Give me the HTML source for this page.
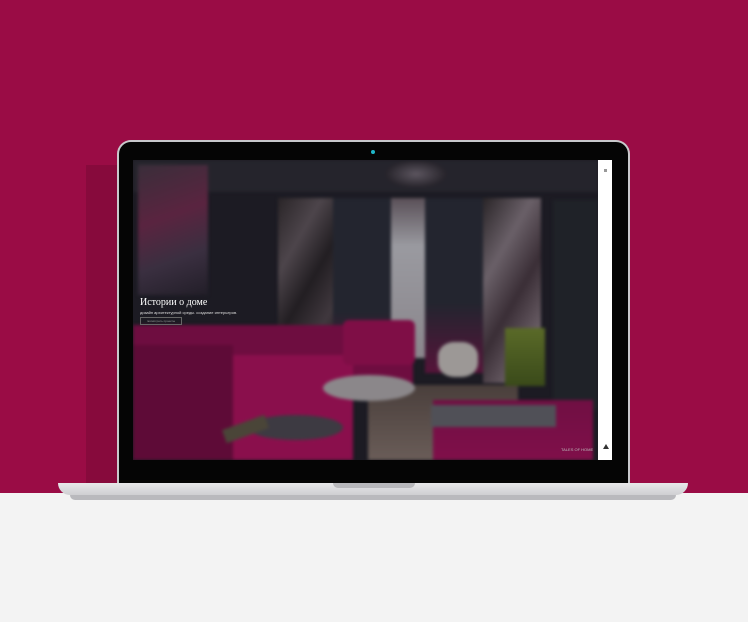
<!DOCTYPE html>
<html><head><meta charset="utf-8"><style>
html,body{margin:0;padding:0}
body{width:748px;height:622px;position:relative;overflow:hidden;background:#f3f3f3;font-family:"Liberation Sans","Noto Sans CJK SC",sans-serif}
.bg{position:absolute;left:0;top:0;width:748px;height:493px;background:#9a0c45}
.shadow{position:absolute;left:86px;top:165px;width:60px;height:328px;background:#870a3c}
.lid{position:absolute;left:117px;top:140px;width:513px;height:345px;background:#c9c9cc;border-radius:14px 14px 0 0}
.bezel{position:absolute;left:119px;top:142px;width:509px;height:343px;background:#050505;border-radius:12px 12px 0 0}
.cam{position:absolute;left:371px;top:150px;width:4px;height:4px;border-radius:50%;background:#1fb7c9}
.screen{position:absolute;left:133px;top:160px;width:465px;height:300px;overflow:hidden;background:#1c1b23}
.in{position:absolute;left:0;top:0;width:465px;height:300px;filter:blur(1.5px)}
.sidebar{position:absolute;left:598px;top:160px;width:14px;height:300px;background:#fff}
.base{position:absolute;left:58px;top:483px;width:630px;height:12px;background:linear-gradient(#e8e8ea,#cfcfd2);border-radius:0 0 20px 20px}
.base2{position:absolute;left:70px;top:495px;width:606px;height:5px;background:#b9b9bd;border-radius:0 0 40px 40px}
.notch{position:absolute;left:333px;top:483px;width:82px;height:5px;background:#b8b8bc;border-radius:0 0 6px 6px}
.s{position:absolute}
</style></head><body>
<div class="bg"></div>
<div class="shadow"></div>
<div class="lid"></div>
<div class="bezel"></div>
<div class="cam"></div>
<div class="screen">
<div class="in">
 <div class="s" style="left:0;top:0;width:465px;height:32px;background:#25242c"></div>
 <div class="s" style="left:252px;top:0;width:62px;height:28px;border-radius:50%;background:radial-gradient(#5d5660,#26232a 70%)"></div>
 <div class="s" style="left:5px;top:5px;width:70px;height:130px;background:linear-gradient(160deg,#3a2e3a,#5a2440 40%,#3a2f40 70%,#221e28)"></div>
 <div class="s" style="left:145px;top:38px;width:55px;height:160px;background:linear-gradient(120deg,#2a2528,#4d454b 30%,#221e22 55%,#40383e 80%,#201a1e)"></div>
 <div class="s" style="left:200px;top:38px;width:58px;height:175px;background:linear-gradient(180deg,#23252f,#23252f 65%,#56143a)"></div>
 <div class="s" style="left:258px;top:38px;width:34px;height:160px;background:linear-gradient(180deg,#5a5058,#9a9aa0 30%,#8a868c)"></div>
 <div class="s" style="left:292px;top:38px;width:58px;height:175px;background:linear-gradient(180deg,#23252f,#23252f 60%,#56143a)"></div>
 <div class="s" style="left:350px;top:38px;width:58px;height:185px;background:linear-gradient(120deg,#2a2528,#6a6068 30%,#3a2e36 55%,#6a5e66 80%,#2a2228)"></div>
 <div class="s" style="left:420px;top:40px;width:45px;height:210px;background:#1f2228"></div>
 <div class="s" style="left:0;top:165px;width:280px;height:60px;background:#6e0d40"></div>
 <div class="s" style="left:0;top:185px;width:100px;height:115px;background:#5e0b37"></div>
 <div class="s" style="left:100px;top:195px;width:120px;height:105px;background:#8a0f4c"></div>
 <div class="s" style="left:210px;top:160px;width:72px;height:45px;border-radius:6px;background:#7f0e46"></div>
 <div class="s" style="left:235px;top:225px;width:150px;height:75px;background:linear-gradient(#4a3f3c,#6a5d58)"></div>
 <div class="s" style="left:190px;top:215px;width:92px;height:26px;border-radius:50%;background:#8b878a"></div>
 <div class="s" style="left:305px;top:182px;width:40px;height:35px;border-radius:40%;background:#9c9896"></div>
 <div class="s" style="left:372px;top:168px;width:40px;height:58px;background:linear-gradient(#5a6a28,#3a4a1a)"></div>
 <div class="s" style="left:300px;top:240px;width:160px;height:60px;background:linear-gradient(#700f43,#800f4a)"></div>
 <div class="s" style="left:298px;top:245px;width:125px;height:22px;background:#505057"></div>
 <div class="s" style="left:115px;top:255px;width:95px;height:25px;border-radius:50%;background:#3d3a42"></div>
 <div class="s" style="left:90px;top:262px;width:45px;height:14px;background:#4a4538;transform:rotate(-20deg)"></div>
</div>
 <div style="position:absolute;left:7px;top:137px;color:#fff;font-family:'Liberation Serif',serif;font-size:10px">Истории о доме</div>
 <div style="position:absolute;left:7px;top:150px;color:#ddd;font-size:4px;white-space:nowrap">дизайн архитектурной среды. создание интерьеров.</div>
 <div style="position:absolute;left:7px;top:157px;width:40px;height:6px;border:1px solid #666;color:#999;font-size:3px;line-height:6px;text-align:center">посмотреть проекты</div>
 <div style="position:absolute;left:428px;top:287px;color:#bbb;font-size:4px">TALES OF HOME</div>
</div>
<div class="sidebar"></div>
<div style="position:absolute;left:604px;top:169px;width:3px;height:3px;background:#999"></div>
<div style="position:absolute;left:603px;top:444px;width:0;height:0;border-left:3px solid transparent;border-right:3px solid transparent;border-bottom:5px solid #333"></div>
<div class="base"></div>
<div class="base2"></div>
<div class="notch"></div>
</body></html>
